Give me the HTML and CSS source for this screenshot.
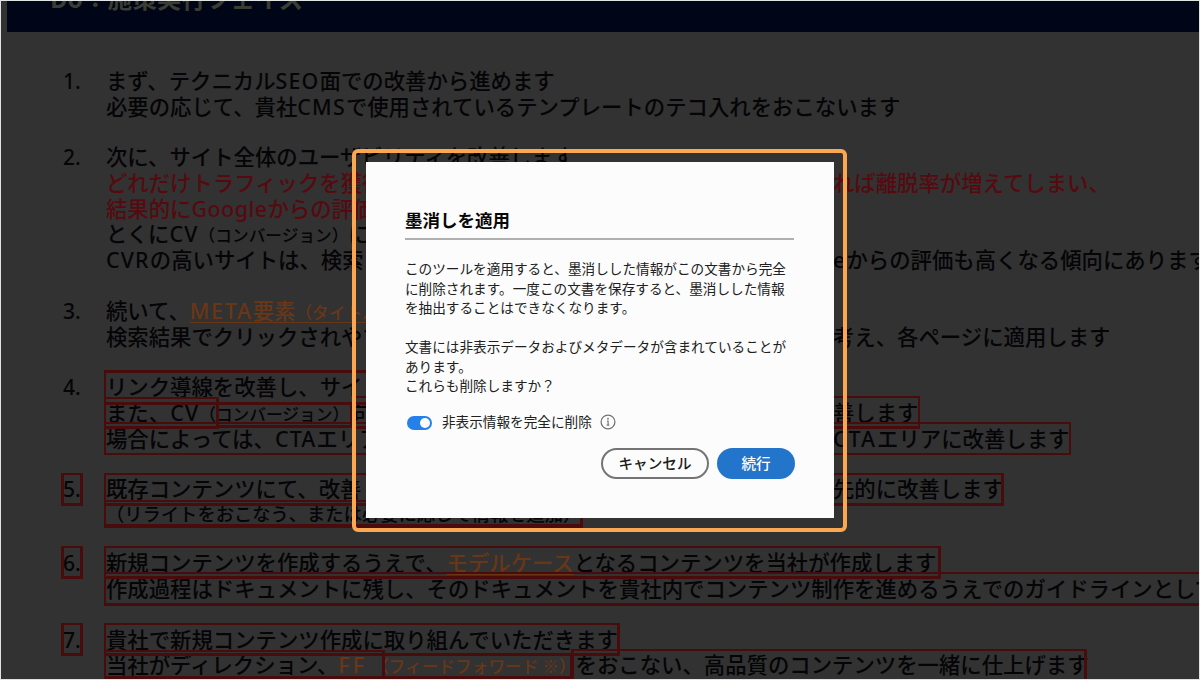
FILE: index.html
```html
<!DOCTYPE html>
<html lang="ja">
<head>
    <meta charset="UTF-8">
    <meta name="viewport" content="width=device-width, initial-scale=1.0">
    <title>墨消しを適用</title>
    <link rel="stylesheet" href="styles.css">
</head>
<body>

    <div class="viewer">
        <header class="slide-header">
            <div class="slide-title">Do：施策実行フェイズ</div>
        </header>

        <!-- Document text -->
        <ol class="steps">
            <li class="step">
                <span class="num">1.</span>
                <div class="lines">
                    <p>まず、テクニカル<span class="en">SEO</span>面での改善から進めます</p>
                    <p>必要の応じて、貴社<span class="en">CMS</span>で使用されているテンプレートのテコ入れをおこないます</p>
                </div>
            </li>
            <li class="step">
                <span class="num">2.</span>
                <div class="lines">
                    <p>次に、サイト全体のユーザビリティを改善します</p>
                    <p class="split red"><span>どれだけトラフィックを獲得</span><span>れば離脱率が増えてしまい、</span></p>
                    <p class="red">結果的に<span class="en google">Google</span>からの評価</p>
                    <p>とくに<span class="en">CV</span><small>（コンバージョン）</small>に</p>
                    <p class="split"><span><span class="en">CVR</span>の高いサイトは、検索</span><span><span class="en">e</span>からの評価も高くなる傾向にあります</span></p>
                </div>
            </li>
            <li class="step">
                <span class="num">3.</span>
                <div class="lines">
                    <p>続いて、<span class="link meta"><span class="en">META</span>要素<small>（タイトル</small></span></p>
                    <p class="split"><span>検索結果でクリックされやす</span><span>考え、各ページに適用します</span></p>
                </div>
            </li>
            <li class="step">
                <span class="num">4.</span>
                <div class="lines">
                    <p>リンク導線を改善し、サイト</p>
                    <p class="split"><span>また、<span class="en">CV</span><small>（コンバージョン）</small>向</span><span>善します</span></p>
                    <p class="split"><span>場合によっては、<span class="en">CTA</span>エリア</span><span><span class="en cta">CTA</span>エリアに改善します</span></p>
                </div>
            </li>
            <li class="step">
                <span class="num">5.</span>
                <div class="lines">
                    <p class="split"><span>既存コンテンツにて、改善し</span><span>先的に改善します</span></p>
                    <p class="note">（リライトをおこなう、または必要に応じて情報を追加）</p>
                </div>
            </li>
            <li class="step">
                <span class="num">6.</span>
                <div class="lines">
                    <p>新規コンテンツを作成するうえで、<span class="link">モデルケース</span>となるコンテンツを当社が作成します</p>
                    <p>作成過程はドキュメントに残し、そのドキュメントを貴社内でコンテンツ制作を進めるうえでのガイドラインとして</p>
                </div>
            </li>
            <li class="step">
                <span class="num">7.</span>
                <div class="lines">
                    <p>貴社で新規コンテンツ作成に取り組んでいただきます</p>
                    <p>当社がディレクション、<span class="link ff"><span class="en">FF</span><small>（フィードフォワード ※）</small></span>をおこない、高品質のコンテンツを一緒に仕上げます</p>
                </div>
            </li>
        </ol>

        <!-- Redaction marks laid over the text -->
        <div class="mark m4a"></div>
        <div class="mark m4b"></div>
        <div class="mark m4c"></div>
        <div class="mark m4d"></div>
        <div class="mark m4e"></div>
        <div class="mark m5n"></div>
        <div class="mark m5a"></div>
        <div class="mark m5b"></div>
        <div class="mark m6n"></div>
        <div class="mark m6a"></div>
        <div class="mark m6b"></div>
        <div class="mark m7n"></div>
        <div class="mark m7a"></div>
        <div class="mark m7b"></div>
        <div class="mark m7c"></div>
        <div class="mark m7d"></div>

        <!-- Dialog -->
        <div class="highlight">
            <div class="dialog">
                <h2>墨消しを適用</h2>
                <div class="message">
                    <p>このツールを適用すると、墨消しした情報がこの文書から完全<br>に削除されます。一度この文書を保存すると、墨消しした情報<br>を抽出することはできなくなります。</p>
                    <p>文書には非表示データおよびメタデータが含まれていることが<br>あります。<br>これらも削除しますか？</p>
                </div>
                <div class="option">
                    <span class="toggle"></span>
                    <span>非表示情報を完全に削除</span>
                    <svg class="info" width="16" height="16" viewBox="0 0 16 16" fill="none" stroke="#747474">
                        <circle cx="8" cy="8" r="6.9" stroke-width="1.3"/>
                        <path d="M6.9 7H8.1V11M6.7 11.2H9.3" stroke-width="1.2"/>
                        <circle cx="8" cy="4.7" r="0.9" fill="#747474" stroke="none"/>
                    </svg>
                </div>
                <div class="buttons">
                    <button class="cancel">キャンセル</button>
                    <button class="continue">続行</button>
                </div>
            </div>
        </div>
    </div>

</body>
</html>
```
FILE: styles.css
```css
* {
    box-sizing: border-box;
}

body {
    margin: 0;
    font-family: "Noto Sans CJK JP", sans-serif;
}

.viewer {
    position: relative;
    width: 1200px;
    height: 680px;
    overflow: hidden;
    background-color: #323232;
    border: 1px solid #dfe3e2;
}

.slide-header {
    height: 31px;
    margin-left: 6px;
    padding-left: 43px;
    background-color: #000518;
    overflow: hidden;
}

.slide-title {
    margin-top: -22px;
    font-size: 24.6px;
    font-weight: 700;
    line-height: 36px;
    color: #3a3d31;
    white-space: nowrap;
}

/* Document text */
.steps {
    display: flex;
    flex-direction: column;
    gap: 25.2px;
    margin: 0;
    padding: 35px 0 0 62px;
    list-style: none;
    font-size: 21.38px;
    font-weight: 500;
    line-height: 25.65px;
    color: #050507;
}

.step {
    display: grid;
    grid-template-columns: 43px 1fr;
}

.num {
    padding-top: 2px;
    font-family: "Noto Sans", sans-serif;
    font-size: 21px;
}

.lines p {
    margin: 0;
    height: 25.65px;
    white-space: nowrap;
}

.split {
    display: grid;
    grid-template-columns: 727px auto;
}

.en {
    font-family: "Noto Sans", sans-serif;
    letter-spacing: 1.2px;
}

.google {
    letter-spacing: 0.5px;
}

.cta {
    letter-spacing: 2px;
}

small {
    font-size: 16.7px;
}

.lines .note {
    height: 22.9px;
    font-size: 18.3px;
}

.red {
    color: #560a10;
}

.link {
    color: #693717;
    text-decoration: underline;
    text-decoration-thickness: 1px;
    text-underline-offset: 3px;
}

.meta .en {
    letter-spacing: 1.7px;
}

.ff {
    text-decoration: none;
}

.ff .en {
    margin-right: 5px;
    letter-spacing: 3px;
}

/* Redaction marks */
.mark {
    position: absolute;
    border: 2.5px solid #480c0c;
    border-width: 2px 3px 3px 2px;
}

.m4a { left: 103px; top: 369px; width: 500px; height: 35px; border-top-width: 3px; }
.m4b { left: 103px; top: 396px; width: 115px; height: 32px; }
.m4c { left: 216px; top: 401px; width: 136px; height: 26px; }
.m4d { left: 351px; top: 395px; width: 568px; height: 33px; border-right-width: 2px; }
.m4e { left: 103px; top: 421px; width: 967px; height: 33px; border-right-width: 2px; border-bottom-width: 2px; }
.m5n { left: 60px; top: 472px; width: 22px; height: 33px; border-left-width: 3px; }
.m5a { left: 103px; top: 472px; width: 900px; height: 33px; }
.m5b { left: 103px; top: 499px; width: 479px; height: 28px; border-bottom-width: 4px; }
.m6n { left: 60px; top: 545px; width: 22px; height: 33px; border-left-width: 3px; }
.m6a { left: 103px; top: 545px; width: 837px; height: 33px; }
.m6b { left: 103px; top: 571px; width: 1110px; height: 34px; }
.m7n { left: 60px; top: 622px; width: 22px; height: 33px; border-left-width: 3px; }
.m7a { left: 103px; top: 622px; width: 516px; height: 33px; }
.m7b { left: 103px; top: 649px; width: 281px; height: 29px; }
.m7c { left: 382px; top: 653px; width: 190px; height: 25px; }
.m7d { left: 570px; top: 648px; width: 516px; height: 33px; border-left-width: 3px; }

/* Dialog */
.highlight {
    position: absolute;
    left: 351px;
    top: 148px;
    width: 495px;
    height: 383px;
    padding: 9px 9px 9px 10px;
    border: 4px solid #fba651;
    border-radius: 6px;
}

.dialog {
    width: 468px;
    height: 356px;
    padding: 41px 40px 0 39px;
    background-color: #fcfcfc;
    color: #202020;
    font-size: 13.63px;
    line-height: 19.5px;
}

.dialog h2 {
    margin: 0;
    height: 37px;
    border-bottom: 2px solid #b0b0b0;
    font-size: 17.5px;
    font-weight: 700;
    line-height: 34px;
    color: #080808;
}

.message {
    padding-top: 19px;
}

.message p {
    margin: 0 0 19.5px;
    white-space: nowrap;
}

.option {
    display: flex;
    align-items: center;
    height: 20px;
    margin-top: -3px;
    padding-left: 2px;
}

.toggle {
    display: flex;
    justify-content: flex-end;
    width: 25px;
    height: 14px;
    margin: 2px 10px 0 0;
    padding: 2px;
    border-radius: 7px;
    background-color: #2680eb;
}

.toggle::after {
    content: "";
    width: 10px;
    height: 10px;
    border-radius: 50%;
    background-color: #fcfcfc;
}

.info {
    margin-left: 8px;
}

.buttons {
    display: flex;
    justify-content: flex-end;
    gap: 8px;
    margin: 16px -1px 0 0;
}

.buttons button {
    height: 31px;
    padding: 0 0 2px;
    border: none;
    border-radius: 16px;
    font-family: inherit;
    font-size: 14.6px;
    font-weight: 500;
}

.buttons .cancel {
    width: 108px;
    border: 2px solid #747474;
    background-color: #fcfcfc;
    color: #202020;
}

.buttons .continue {
    width: 78px;
    background-color: #2374cb;
    color: #fff;
}
```
